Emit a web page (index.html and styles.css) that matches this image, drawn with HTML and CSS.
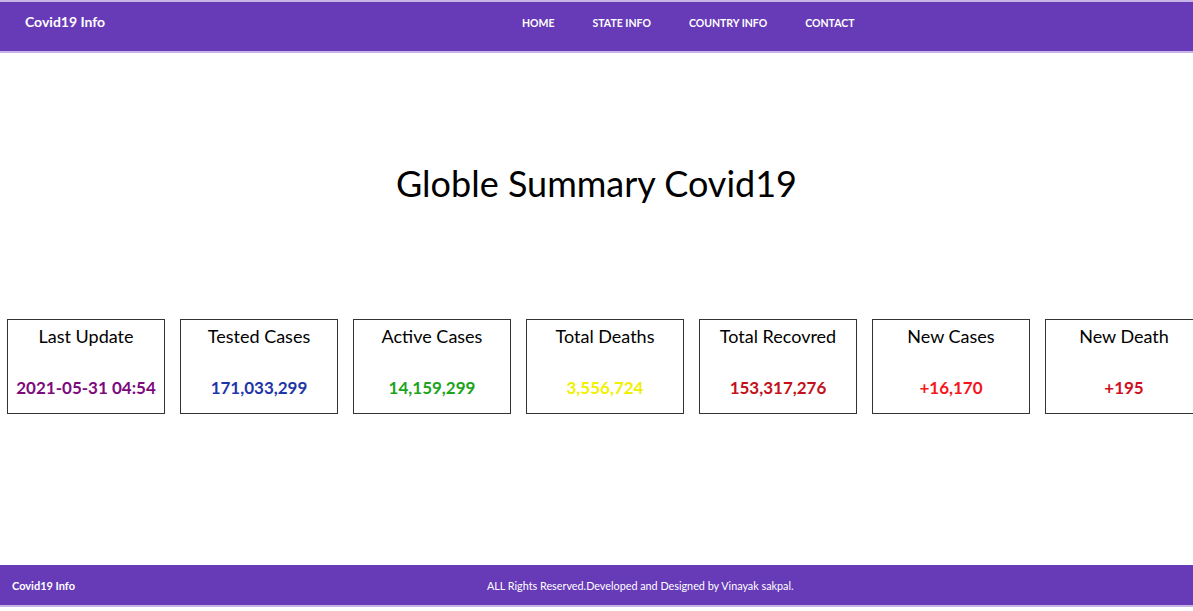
FILE: index.html
```html
<!DOCTYPE html>
<html>
<head>
<meta charset="utf-8">
<title>Covid19 Info</title>
<link rel="stylesheet" href="styles.css">
</head>
<body>
<header class="navbar">
  <div class="brand">Covid19 Info</div>
  <nav class="nav">
    <a href="#">HOME</a>
    <a href="#">STATE INFO</a>
    <a href="#">COUNTRY INFO</a>
    <a href="#">CONTACT</a>
  </nav>
</header>
<main class="main">
  <h1 class="title">Globle Summary Covid19</h1>
  <div class="cards">
    <div class="card"><div class="card-title">Last Update</div><div class="card-value c-purple">2021-05-31 04:54</div></div>
    <div class="card"><div class="card-title">Tested Cases</div><div class="card-value c-blue">171,033,299</div></div>
    <div class="card"><div class="card-title">Active Cases</div><div class="card-value c-green">14,159,299</div></div>
    <div class="card"><div class="card-title">Total Deaths</div><div class="card-value c-yellow">3,556,724</div></div>
    <div class="card"><div class="card-title">Total Recovred</div><div class="card-value c-darkred">153,317,276</div></div>
    <div class="card"><div class="card-title">New Cases</div><div class="card-value c-red">+16,170</div></div>
    <div class="card"><div class="card-title">New Death</div><div class="card-value c-crimson">+195</div></div>
  </div>
</main>
<footer class="footer">
  <div class="footer-brand">Covid19 Info</div>
  <div class="footer-text">ALL Rights Reserved.Developed and Designed by Vinayak sakpal.</div>
</footer>
</body>
</html>
```
FILE: styles.css
```css
* { box-sizing: border-box; }
html, body { margin: 0; padding: 0; }
body {
  font-family: "Lato", "Open Sans", sans-serif;
  color: #000;
  background: #fff;
  overflow: hidden;
  height: 611px;
  display: flex;
  flex-direction: column;
}
.navbar {
  height: 53px;
  background: #673ab7;
  border-top: 2px solid #c7b5e8;
  border-bottom: 2px solid #c7b5e8;
  display: flex;
  align-items: center;
  padding: 0 0 10px 25px;
  color: #fff;
  flex: none;
}
.brand {
  font-weight: 700;
  font-size: 14px;
  width: 497px;
}
.nav {
  display: flex;
  gap: 38px;
}
.nav a {
  color: #fff;
  text-decoration: none;
  font-weight: 700;
  font-size: 10.5px;
  padding-top: 2px;
}
.main {
  flex: 1;
  display: flex;
  flex-direction: column;
}
.title {
  margin: 110px 0 0;
  text-align: center;
  font-weight: 400;
  font-size: 36px;
  line-height: 40px;
}
.cards {
  display: flex;
  gap: 15px;
  padding-left: 7px;
  margin-top: 116px;
  overflow: hidden;
}
.card {
  flex: none;
  width: 158px;
  height: 95px;
  border: 1px solid #333;
  text-align: center;
  padding-top: 5px;
}
.card-title {
  font-size: 18px;
  line-height: 22px;
}
.card-value {
  margin-top: 30px;
  font-size: 17px;
  font-weight: 700;
  line-height: 22px;
}
.c-purple { color: #7d0a7d; }
.c-blue { color: #1f36a8; }
.c-green { color: #1ca41c; }
.c-yellow { color: #f0f000; }
.c-darkred { color: #c4101a; }
.c-red { color: #f5161c; }
.c-crimson { color: #d0101e; }
.footer {
  flex: none;
  height: 42px;
  margin-bottom: 4px;
  background: #673ab7;
  border-bottom: 2px solid #c7b5e8;
  color: #fff;
  display: flex;
  align-items: center;
  padding-left: 12px;
  font-size: 11px;
}
.footer-brand {
  font-weight: 700;
  width: 475px;
}
.footer-text {
  font-size: 10.8px;
}
```
